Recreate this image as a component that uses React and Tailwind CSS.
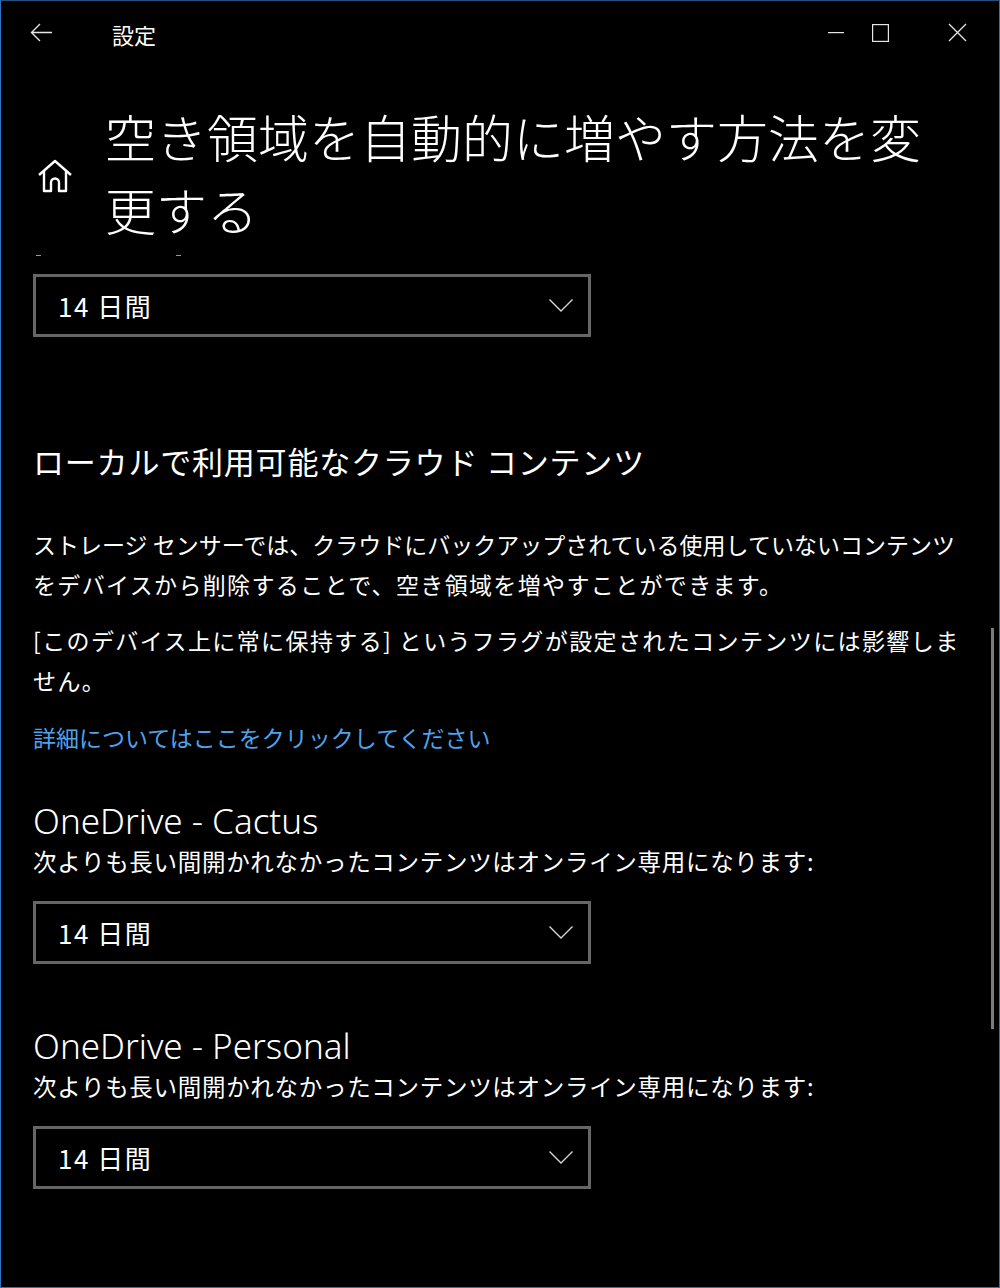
const jp = "font-['Noto_Sans_CJK_JP',sans-serif]";
const latin = "font-['Noto_Sans','Noto_Sans_CJK_JP',sans-serif]";

function Dropdown({ value }) {
  return (
    <div className="flex h-[63px] w-[558px] items-center justify-between border-[3px] border-[#666666] pl-[22px] pr-[15px]">
      <span className={`${jp} text-[26px] leading-none tracking-[1.5px] text-white`}>{value}</span>
      <svg width="24" height="13" viewBox="0 0 24 13" fill="none" stroke="#d6d6d6" strokeWidth="1.4">
        <polyline points="0.5,0.5 12,12 23.5,0.5" />
      </svg>
    </div>
  );
}

function CloudAccount({ name, className }) {
  return (
    <div className={className}>
      <h3 className={`${latin} text-[35px] leading-[40px] font-light text-white`}>{name}</h3>
      <p className={`${jp} whitespace-nowrap text-[23.5px] leading-[40px] tracking-[0.7px] text-white`}>
        次よりも長い間開かれなかったコンテンツはオンライン専用になります:
      </p>
      <div className="mt-[20px]">
        <Dropdown value="14 日間" />
      </div>
    </div>
  );
}

export default function App() {
  return (
    <div className="relative h-[1288px] w-[1000px] overflow-hidden border border-[#2b73c4] border-t-[#25507f] bg-black text-white">
      {/* title bar */}
      <div className="flex h-[63px] items-center">
        <svg className="ml-[29px]" width="23" height="19" viewBox="0 0 23 19" fill="none" stroke="#e6e6e6" strokeWidth="1.4">
          <path d="M22 9.5H1.5M10 1L1.5 9.5L10 18" />
        </svg>
        <span className={`${jp} ml-[59px] mt-[2px] text-[22px] leading-none text-white`}>設定</span>
        <div className="ml-auto flex items-center">
          <svg width="16" height="2" viewBox="0 0 16 2" className="mr-[28px]">
            <rect width="16" height="1.2" fill="#e6e6e6" />
          </svg>
          <svg width="17" height="18" viewBox="0 0 17 18" fill="none" stroke="#e6e6e6" strokeWidth="1.2" className="mr-[59px]">
            <rect x="0.6" y="0.6" width="15.8" height="16.8" />
          </svg>
          <svg width="19" height="19" viewBox="0 0 19 19" fill="none" stroke="#e6e6e6" strokeWidth="1.3" className="mr-[32px]">
            <path d="M1 1L18 18M18 1L1 18" />
          </svg>
        </div>
      </div>

      {/* page header */}
      <div className="mt-[36px] flex items-center">
        <svg className="ml-[36px] mt-[6px]" width="36" height="34" viewBox="0 0 36 34" fill="none" stroke="#ffffff" strokeWidth="2.4" strokeLinejoin="round">
          <path d="M2 16L18 2L34 16" />
          <path d="M7 11.5V32H14V23.5A4 4 0 0 1 22 23.5V32H29V11.5" />
        </svg>
        <h1 className={`${jp} ml-[32px] text-[51px] font-light leading-[73px] text-white`}>
          空き領域を自動的に増やす方法を変
          <br />
          更する
        </h1>
      </div>

      <div className="flex flex-col pl-[32px]">
        <div className="mt-[9px] flex h-[1px] items-center">
          <span className="ml-[3px] h-[1px] w-[5px] bg-[#9a9a9a]" />
          <span className="ml-[135px] h-[1px] w-[5px] bg-[#9a9a9a]" />
        </div>
        <div className="mt-[18px]">
          <Dropdown value="14 日間" />
        </div>

        <h2 className={`${jp} mt-[104px] whitespace-nowrap text-[31px] leading-[40px] tracking-[0.8px] text-white`}>
          ローカルで利用可能なクラウド コンテンツ
        </h2>

        <p className={`${jp} mt-[43px] whitespace-nowrap text-[23px] leading-[40px] text-white`}>
          <span>ストレージ センサーでは、クラウドにバックアップされている使用していないコンテンツ</span>
          <br />
          <span className="tracking-[1.35px]">をデバイスから削除することで、空き領域を増やすことができます。</span>
        </p>
        <p className={`${jp} mt-[16px] whitespace-nowrap text-[23px] leading-[40px] text-white`}>
          <span className="tracking-[1.4px]">[このデバイス上に常に保持する] というフラグが設定されたコンテンツには影響しま</span>
          <br />
          <span className="tracking-[1.4px]">せん。</span>
        </p>
        <a href="#" className={`${jp} mt-[17px] text-[23px] leading-[40px] text-[#4ca3ee]`}>
          詳細についてはここをクリックしてください
        </a>

        <CloudAccount name="OneDrive - Cactus" className="mt-[44px]" />
        <CloudAccount name="OneDrive - Personal" className="mt-[62px]" />
      </div>

      {/* scrollbar */}
      <div className="absolute left-[990px] top-[627px] h-[401px] w-[3px] bg-[#7b7b7b]" />
    </div>
  );
}
